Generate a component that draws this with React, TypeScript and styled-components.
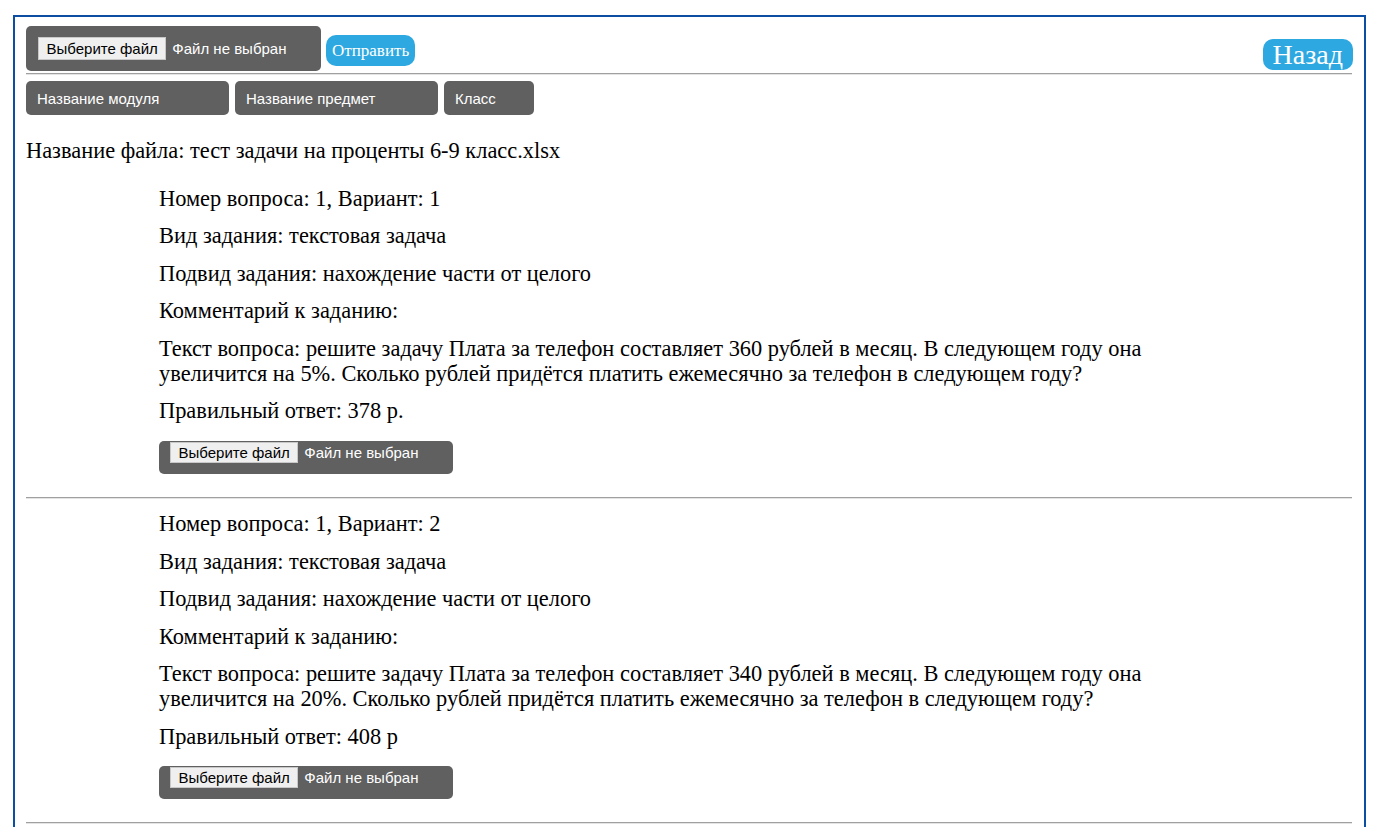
import React from "react";
import styled, { createGlobalStyle } from "styled-components";

const GlobalStyle = createGlobalStyle`
	html, body {
		margin: 0;
		padding: 0;
		background: #ffffff;
	}
	body {
		font-family: "Liberation Serif", "Times New Roman", serif;
		color: #000000;
	}
`;

// **PAGE
const PageSC = styled.div`
	margin: 15px 28px 0 13px;
	border: 2px solid #0b4ea2;
	border-bottom: none;
	padding: 9px 12px 0 11px;
	min-height: 820px;
	box-sizing: border-box;
`;

const Divider = styled.hr`
	margin: 0;
	border: none;
	border-top: 1px solid #a0a0a0;
	border-bottom: 1px solid #e4e4e4;
	height: 0;
`;

// **HEADER
const TopBarSC = styled.div`
	display: flex;
	align-items: flex-end;
	padding-bottom: 2px;
`;

const UploadBoxSC = styled.div<{ $big?: boolean }>`
	display: flex;
	align-items: flex-start;
	box-sizing: border-box;
	background-color: #606060;
	border-radius: 5px;
	width: ${(p) => (p.$big ? "295px" : "294px")};
	height: ${(p) => (p.$big ? "45px" : "33px")};
	padding: ${(p) => (p.$big ? "11px 12px" : "1px 11px")};
	font-family: "Liberation Sans", Arial, sans-serif;
	font-size: 15px;
`;

const FileButtonSC = styled.button<{ $big?: boolean }>`
	font-family: "Liberation Sans", Arial, sans-serif;
	font-size: inherit;
	color: #000000;
	background-color: #efefef;
	border: 1px solid #c8c8c8;
	border-radius: 0;
	height: ${(p) => (p.$big ? "23px" : "21px")};
	padding: 0 7.5px;
	margin: 0 6px 0 0;
	cursor: pointer;
`;

const FileNameSC = styled.span<{ $big?: boolean }>`
	color: #ffffff;
	line-height: ${(p) => (p.$big ? "23px" : "21px")};
`;

const BlueButtonSC = styled.button<{ $size: number }>`
	font-family: "Liberation Serif", "Times New Roman", serif;
	font-size: ${(p) => p.$size}px;
	color: #ffffff;
	background-color: #2ea8e0;
	border: none;
	border-radius: 10px;
	cursor: pointer;
`;

const SendButtonSC = styled(BlueButtonSC)`
	height: 31px;
	padding: 0 6px;
	margin: 0 0 5px 5px;
`;

const BackButtonSC = styled(BlueButtonSC)`
	height: 31px;
	padding: 0 10px;
	margin: 0 -1px 1px auto;
	line-height: 30px;
`;

// **FILTERS
const FilterRowSC = styled.div`
	display: flex;
	gap: 6px;
	margin-top: 6px;
`;

const FilterBoxSC = styled.div<{ $width: number }>`
	box-sizing: border-box;
	width: ${(p) => p.$width}px;
	height: 34px;
	padding: 0 11px;
	display: flex;
	align-items: center;
	background-color: #606060;
	border-radius: 5px;
	color: #ffffff;
	font-family: "Liberation Sans", Arial, sans-serif;
	font-size: 15px;
`;

// **CONTENT
const FileTitleSC = styled.p`
	font-size: 22.4px;
	line-height: 25px;
	margin: 22.5px 0 23px;
`;

const QuestionSC = styled.section`
	padding: 0 0 0 133px;
	width: 1000px;
	box-sizing: content-box;
`;

const LineSC = styled.p`
	font-size: 22.4px;
	line-height: 25px;
	margin: 0 0 12.5px;
`;

const QuestionFooterSC = styled.div`
	padding: 5px 0 23px;
`;

const SpacerSC = styled.div`
	height: 12.5px;
`;

type Question = {
	number: number;
	variant: number;
	text: string;
	answer: string;
};

const questions: Question[] = [
	{
		number: 1,
		variant: 1,
		text: "решите задачу Плата за телефон составляет 360 рублей в месяц. В следующем году она увеличится на 5%. Сколько рублей придётся платить ежемесячно за телефон в следующем году?",
		answer: "378 р.",
	},
	{
		number: 1,
		variant: 2,
		text: "решите задачу Плата за телефон составляет 340 рублей в месяц. В следующем году она увеличится на 20%. Сколько рублей придётся платить ежемесячно за телефон в следующем году?",
		answer: "408 р",
	},
];

const FilePicker: React.FC<{ big?: boolean }> = ({ big }) => (
	<UploadBoxSC $big={big}>
		<FileButtonSC $big={big} type="button">
			Выберите файл
		</FileButtonSC>
		<FileNameSC $big={big}>Файл не выбран</FileNameSC>
	</UploadBoxSC>
);

export default function App() {
	return (
		<>
			<GlobalStyle />
			<PageSC>
				<TopBarSC>
					<FilePicker big />
					<SendButtonSC $size={17}>Отправить</SendButtonSC>
					<BackButtonSC $size={28}>Назад</BackButtonSC>
				</TopBarSC>
				<Divider />
				<FilterRowSC>
					<FilterBoxSC $width={203}>Название модуля</FilterBoxSC>
					<FilterBoxSC $width={203}>Название предмет</FilterBoxSC>
					<FilterBoxSC $width={90}>Класс</FilterBoxSC>
				</FilterRowSC>
				<FileTitleSC>Название файла: тест задачи на проценты 6-9 класс.xlsx</FileTitleSC>
				{questions.map((q, i) => (
					<React.Fragment key={i}>
						{i > 0 && <SpacerSC />}
						<QuestionSC>
							<LineSC>
								Номер вопроса: {q.number}, Вариант: {q.variant}
							</LineSC>
							<LineSC>Вид задания: текстовая задача</LineSC>
							<LineSC>Подвид задания: нахождение части от целого</LineSC>
							<LineSC>Комментарий к заданию:</LineSC>
							<LineSC>Текст вопроса: {q.text}</LineSC>
							<LineSC>Правильный ответ: {q.answer}</LineSC>
							<QuestionFooterSC>
								<FilePicker />
							</QuestionFooterSC>
						</QuestionSC>
						<Divider />
					</React.Fragment>
				))}
			</PageSC>
		</>
	);
}
